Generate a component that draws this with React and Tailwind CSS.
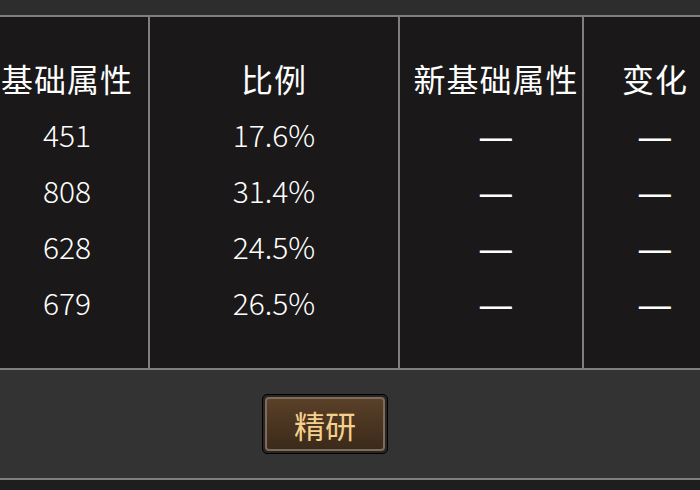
import React from "react";

const rows = [
  ["451", "17.6%"],
  ["808", "31.4%"],
  ["628", "24.5%"],
  ["679", "26.5%"],
];

const cols = [
  { key: 0, head: "基础属性", width: "w-[150px] pr-[14px]" },
  { key: 1, head: "比例", width: "w-[250px]" },
  { key: 2, head: "新基础属性", width: "w-[184px] pl-[10px]" },
  { key: 3, head: "变化", width: "w-[140px] pl-[4px]" },
];

function cell(col, row) {
  if (col === 0) return row[0];
  if (col === 1) return row[1];
  return "—";
}

function App() {
  return (
    <div
      className="flex h-[490px] w-[700px] flex-col overflow-hidden bg-[#1e1e1e] text-white"
      style={{ fontFamily: '"Noto Sans CJK SC", "Liberation Sans", sans-serif' }}
    >
      <div className="h-[17px] shrink-0 border-b-2 border-[#7f7f7f] bg-[#2d2d2d]" />

      <div className="flex h-[353px] shrink-0 border-b-2 border-[#7f7f7f] bg-[#1a1818]">
        {cols.map((c) => (
          <div
            key={c.key}
            className={`flex shrink-0 flex-col items-center border-r-2 border-[#7f7f7f] pt-[33px] ${c.width}`}
          >
            <div className="flex h-[56px] items-center whitespace-nowrap text-[32px] font-normal leading-none tracking-[1px]">
              {c.head}
            </div>
            {rows.map((r, i) => (
              <div
                key={i}
                className={`flex h-[56px] items-center whitespace-nowrap leading-none ${
                  c.key > 1 ? "text-[40px] font-normal" : "text-[30px] font-light"
                }`}
              >
                {cell(c.key, r)}
              </div>
            ))}
          </div>
        ))}
      </div>

      <div className="flex h-[110px] shrink-0 items-center border-b-2 border-[#7f7f7f] bg-[#333333] pl-[262px]">
        <button className="flex h-[60px] w-[126px] items-center justify-center rounded-[5px] border border-black bg-[#2a2520] p-[2px]">
          <span className="flex h-full w-full items-center justify-center rounded-[4px] border-2 border-[#7c6c5c] bg-gradient-to-b from-[#5a4028] to-[#3b2a1a] text-[31px] leading-none text-[#f5d08c]">
            精研
          </span>
        </button>
      </div>
    </div>
  );
}

export default App;
